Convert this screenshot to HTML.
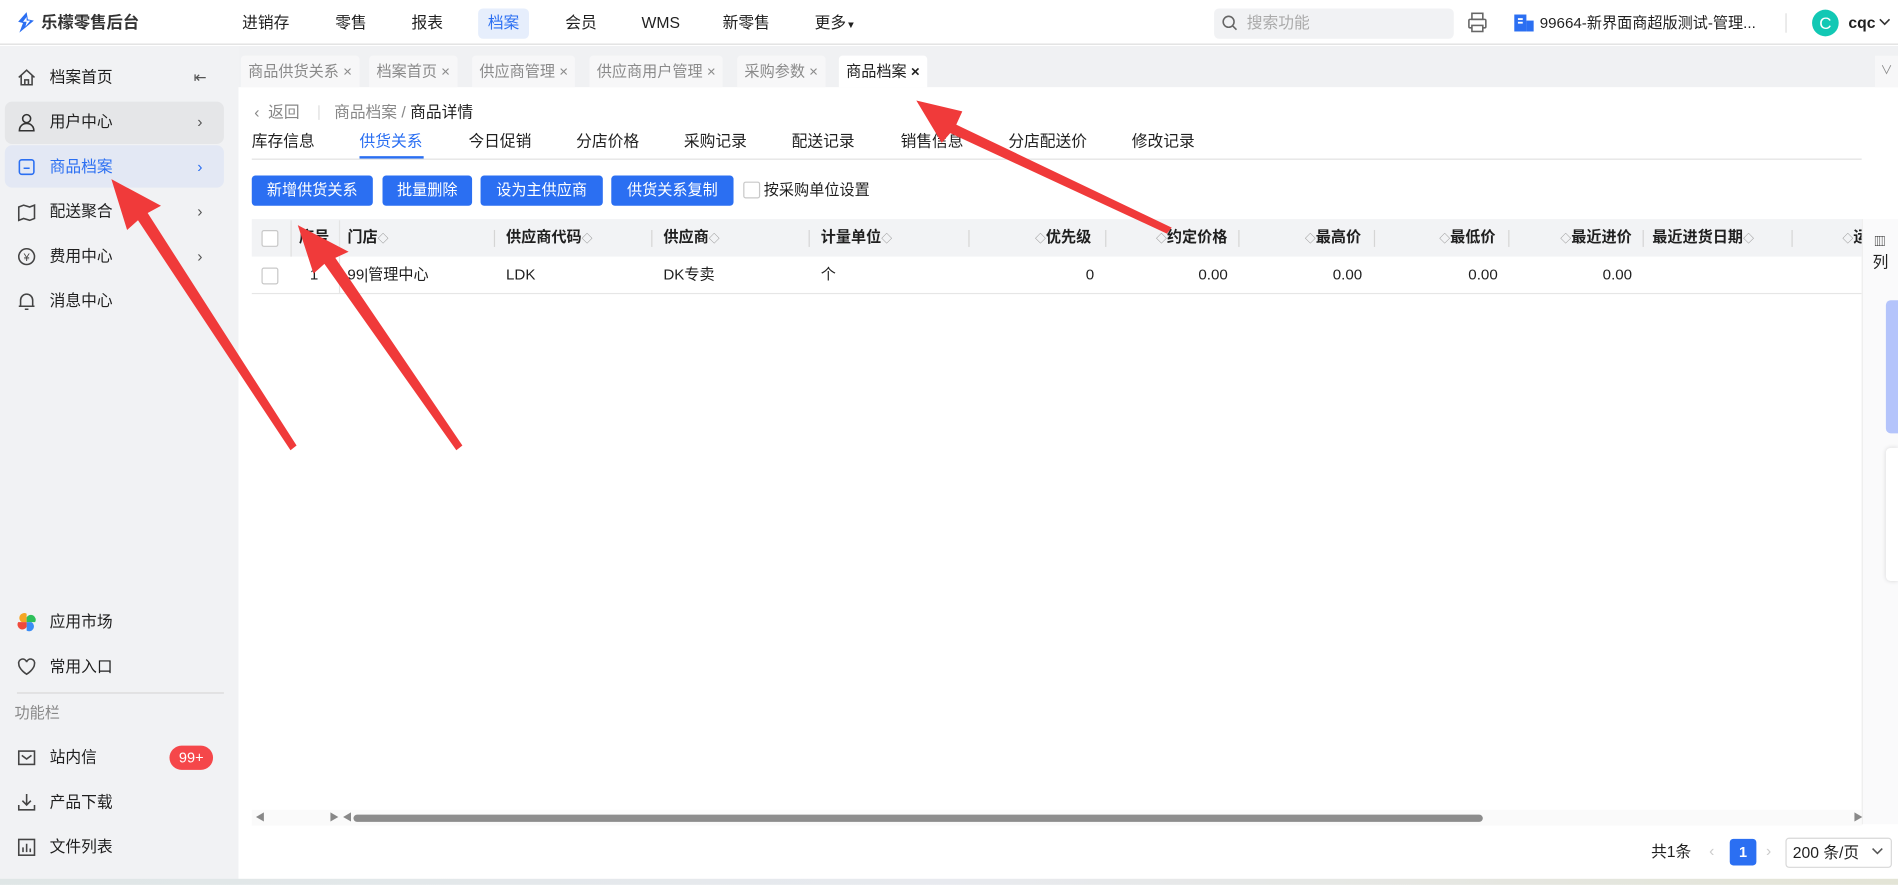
<!DOCTYPE html>
<html><head><meta charset="utf-8"><style>
*{margin:0;padding:0;box-sizing:border-box}
html,body{width:1898px;height:884px;overflow:hidden;background:#fff}
#w{position:absolute;left:0;top:0;width:1568px;height:731px;transform:scale(1.21046);transform-origin:0 0;font-family:"Liberation Sans","Noto Sans CJK SC",sans-serif;font-size:13px;color:#1f1f1f}
.a{position:absolute;white-space:nowrap;line-height:18px}
.hdr{left:0;top:0;width:1568px;height:37px;background:#fff;border-bottom:1px solid #dcdcdc}
.nav{top:10px;font-size:13px}
.side{left:0;top:38px;width:197px;height:693px;background:#f1f2f4}
.si{left:4px;width:181px;height:35px;border-radius:6px}
.st{left:41px;font-size:13px}
.ic{left:14px;width:16px;height:16px}
.chev{left:163px;color:#555;font-size:13px}
.tab{top:46px;height:26px;background:#f7f7f8;color:#8a8a8a;font-size:12.5px;padding:4px 6px;border-radius:3px 3px 0 0}
.btn{top:145px;height:25px;background:#2b6ff2;color:#fff;border-radius:3px;font-size:12.5px;text-align:center;line-height:25px}
.th{top:187px;font-weight:bold;font-size:12.5px}
.td{top:218px;font-size:12.5px}
.sep{top:190px;width:1px;height:14px;background:#d5d5d5}
.sort{color:#999;font-size:9px}
.cb{width:14px;height:14px;border:1px solid #c8c8c8;background:#fff;border-radius:2px}
</style></head><body><div id="w">
<div class="a hdr"></div>
<svg class="a" style="left:14px;top:10px" width="16" height="18" viewBox="0 0 16 18"><path d="M8 0L1 8l4 1-3 8 12-10-5-1z" fill="#2b6ff2"/><path d="M8 4l-3 4h3l-1 4 4-5H8z" fill="#fff"/></svg>
<div class="a" style="left:34px;top:10px;font-weight:bold;font-size:13.5px;color:#333">乐檬零售后台</div>
<div class="a nav" style="left:200px">进销存</div>
<div class="a nav" style="left:277px">零售</div>
<div class="a nav" style="left:340px">报表</div>
<div class="a" style="left:395px;top:7px;width:42px;height:25px;background:#e6eefc;border-radius:4px"></div>
<div class="a nav" style="left:403px;color:#2b6ff2">档案</div>
<div class="a nav" style="left:467px">会员</div>
<div class="a nav" style="left:530px">WMS</div>
<div class="a nav" style="left:597px">新零售</div>
<div class="a nav" style="left:673px">更多<span style="font-size:8px">▼</span></div>
<div class="a" style="left:1003px;top:7px;width:198px;height:25px;background:#f1f2f4;border-radius:4px"></div>
<svg class="a" style="left:1009px;top:12px" width="14" height="14"><circle cx="6" cy="6" r="4.5" fill="none" stroke="#666" stroke-width="1.3"/><path d="M9.5 9.5l3 3" stroke="#666" stroke-width="1.3"/></svg>
<div class="a" style="left:1030px;top:10px;color:#aaa">搜索功能</div>
<svg class="a" style="left:1212px;top:10px" width="17" height="18"><rect x="4" y="1" width="9" height="5" fill="none" stroke="#666" stroke-width="1.3"/><rect x="1.5" y="6" width="14" height="7" rx="1" fill="none" stroke="#666" stroke-width="1.3"/><rect x="4" y="11" width="9" height="5" fill="#fff" stroke="#666" stroke-width="1.3"/></svg>
<svg class="a" style="left:1250px;top:11px" width="18" height="16"><rect x="1" y="1" width="10" height="14" fill="#2b6ff2"/><rect x="11" y="6" width="6" height="9" fill="#2b6ff2"/><rect x="4" y="4" width="4" height="1.5" fill="#fff"/><rect x="4" y="7" width="4" height="1.5" fill="#fff"/></svg>
<div class="a" style="left:1272px;top:10px;font-size:12.5px">99664-新界面商超版测试-管理...</div>
<div class="a" style="left:1475px;top:11px;width:1px;height:16px;background:#ddd"></div>
<div class="a" style="left:1497px;top:8px;width:22px;height:22px;border-radius:50%;background:#12c8b4;color:#fff;text-align:center;line-height:22px;font-size:14px">C</div>
<div class="a" style="left:1527px;top:10px;font-weight:bold">cqc</div>
<svg class="a" style="left:1552px;top:15px" width="10" height="8"><path d="M1 1l4 4 4-4" fill="none" stroke="#333" stroke-width="1.3"/></svg>

<div class="a side"></div>
<svg class="a ic" style="top:56px" viewBox="0 0 16 16"><path d="M1.5 8L8 2l6.5 6M3.5 6.5V14h9V6.5M6.5 14v-4h3v4" fill="none" stroke="#444" stroke-width="1.3"/></svg>
<div class="a st" style="top:55px">档案首页</div>
<div class="a" style="left:160px;top:55px;color:#555">⇤</div>
<div class="a si" style="top:84px;background:#e5e6e8"></div>
<svg class="a ic" style="top:93px" viewBox="0 0 16 16"><circle cx="8" cy="5" r="3.3" fill="none" stroke="#333" stroke-width="1.3"/><path d="M2 15c0-4 3-6 6-6s6 2 6 6z" fill="none" stroke="#333" stroke-width="1.3"/></svg>
<div class="a st" style="top:92px">用户中心</div><div class="a chev" style="top:92px">›</div>
<div class="a si" style="top:120px;background:#e3e8f4"></div>
<svg class="a ic" style="top:130px" viewBox="0 0 16 16"><rect x="2" y="2" width="12" height="12" rx="2" fill="none" stroke="#2b6ff2" stroke-width="1.3"/><path d="M5.5 9h5" stroke="#2b6ff2" stroke-width="1.3"/></svg>
<div class="a st" style="top:129px;color:#2b6ff2">商品档案</div><div class="a chev" style="top:129px;color:#2b6ff2">›</div>
<svg class="a ic" style="top:167px" viewBox="0 0 16 16"><path d="M1.5 4l4-1.5 5 1.5 4-1.5v11l-4 1.5-5-1.5-4 1.5z" fill="none" stroke="#444" stroke-width="1.3"/></svg>
<div class="a st" style="top:166px">配送聚合</div><div class="a chev" style="top:166px">›</div>
<svg class="a ic" style="top:204px" viewBox="0 0 16 16"><circle cx="8" cy="8" r="6.5" fill="none" stroke="#444" stroke-width="1.3"/><text x="8" y="11.5" font-size="9" text-anchor="middle" fill="#444">¥</text></svg>
<div class="a st" style="top:203px">费用中心</div><div class="a chev" style="top:203px">›</div>
<svg class="a ic" style="top:241px" viewBox="0 0 16 16"><path d="M3 12V7a5 5 0 0110 0v5zM1.5 12h13M6.5 14.5h3" fill="none" stroke="#444" stroke-width="1.3"/></svg>
<div class="a st" style="top:240px">消息中心</div>
<svg class="a ic" style="top:506px" viewBox="0 0 16 16"><path d="M8 8V1a4 4 0 00-4 7z" fill="#f5a623"/><path d="M8 8h7a4 4 0 00-7-4z" fill="#2ec05a"/><path d="M8 8v7a4 4 0 004-7z" fill="#3a8cf5"/><path d="M8 8H1a4 4 0 007 4z" fill="#f04a3c"/></svg>
<div class="a st" style="top:505px">应用市场</div>
<svg class="a ic" style="top:543px" viewBox="0 0 16 16"><path d="M8 14S1.5 10 1.5 5.5A3.3 3.3 0 018 4a3.3 3.3 0 016.5 1.5C14.5 10 8 14 8 14z" fill="none" stroke="#444" stroke-width="1.3"/></svg>
<div class="a st" style="top:542px">常用入口</div>
<div class="a" style="left:14px;top:572px;width:171px;height:1px;background:#d8d8d8"></div>
<div class="a" style="left:12px;top:580px;color:#888;font-size:12.5px">功能栏</div>
<svg class="a ic" style="top:618px" viewBox="0 0 16 16"><rect x="1.5" y="2.5" width="13" height="11" fill="none" stroke="#444" stroke-width="1.3"/><path d="M4 6l4 3 4-3" fill="none" stroke="#444" stroke-width="1.3"/></svg>
<div class="a st" style="top:617px">站内信</div>
<div class="a" style="left:140px;top:616px;width:36px;height:20px;border-radius:10px;background:#f5474a;color:#fff;font-size:12px;text-align:center;line-height:20px">99+</div>
<svg class="a ic" style="top:655px" viewBox="0 0 16 16"><path d="M8 1v9M4.5 6.5L8 10l3.5-3.5M1.5 10v4h13v-4" fill="none" stroke="#444" stroke-width="1.3"/></svg>
<div class="a st" style="top:654px">产品下载</div>
<svg class="a ic" style="top:692px" viewBox="0 0 16 16"><rect x="1.5" y="1.5" width="13" height="13" fill="none" stroke="#444" stroke-width="1.3"/><path d="M5 12V8M8 12V5M11 12V9" stroke="#444" stroke-width="1.3"/></svg>
<div class="a st" style="top:691px">文件列表</div>

<div class="a" style="left:197px;top:38px;width:1371px;height:34px;background:#f0f1f3"></div>
<div class="a tab" style="left:199px">商品供货关系 ×</div>
<div class="a tab" style="left:305px">档案首页 ×</div>
<div class="a tab" style="left:390px">供应商管理 ×</div>
<div class="a tab" style="left:487px">供应商用户管理 ×</div>
<div class="a tab" style="left:609px">采购参数 ×</div>
<div class="a tab" style="left:693px;background:#fff;color:#1f1f1f">商品档案 <b>×</b></div>
<div class="a" style="left:1549px;top:46px;width:19px;height:26px;background:#f7f7f8;color:#888;font-size:10px;text-align:center;line-height:26px">∨</div>

<div class="a" style="left:210px;top:84px;color:#888">‹ &nbsp;返回</div>
<div class="a" style="left:263px;top:87px;width:1px;height:12px;background:#ddd"></div>
<div class="a" style="left:276px;top:84px;color:#888">商品档案 / <span style="color:#1f1f1f">商品详情</span></div>
<div class="a" style="left:208px;top:108px">库存信息</div>
<div class="a" style="left:297px;top:108px;color:#2b6ff2">供货关系</div>
<div class="a" style="left:387px;top:108px">今日促销</div>
<div class="a" style="left:476px;top:108px">分店价格</div>
<div class="a" style="left:565px;top:108px">采购记录</div>
<div class="a" style="left:654px;top:108px">配送记录</div>
<div class="a" style="left:744px;top:108px">销售信息</div>
<div class="a" style="left:833px;top:108px">分店配送价</div>
<div class="a" style="left:935px;top:108px">修改记录</div>
<div class="a" style="left:208px;top:131px;width:1330px;height:1px;background:#e2e2e2"></div>
<div class="a" style="left:297px;top:129px;width:53px;height:2px;background:#2b6ff2"></div>
<div class="a btn" style="left:208px;width:100px">新增供货关系</div>
<div class="a btn" style="left:316px;width:74px">批量删除</div>
<div class="a btn" style="left:397px;width:101px">设为主供应商</div>
<div class="a btn" style="left:505px;width:101px">供货关系复制</div>
<div class="a cb" style="left:614px;top:150px"></div>
<div class="a" style="left:631px;top:148px;font-size:12.5px">按采购单位设置</div>

<div class="a" style="left:208px;top:181px;width:1330px;height:31px;background:#f2f3f5"></div>
<div class="a" style="left:208px;top:242px;width:1330px;height:1px;background:#e6e6e6"></div>
<div class="a cb" style="left:216px;top:190px"></div>
<div class="a" style="left:240px;top:182px;width:1px;height:30px;background:#e0e0e0"></div>
<div class="a th" style="left:247px">序号</div>
<div class="a" style="left:280px;top:182px;width:1px;height:60px;background:#e4e4e4"></div>
<div class="a th" style="left:287px">门店<span class="sort">◇</span></div>
<div class="a sep" style="left:408px"></div>
<div class="a th" style="left:418px">供应商代码<span class="sort">◇</span></div>
<div class="a sep" style="left:538px"></div>
<div class="a th" style="left:548px">供应商<span class="sort">◇</span></div>
<div class="a sep" style="left:668px"></div>
<div class="a th" style="left:678px">计量单位<span class="sort">◇</span></div>
<div class="a sep" style="left:800px"></div>
<div class="a th" style="left:855px"><span class="sort">◇</span>优先级</div>
<div class="a sep" style="left:913px"></div>
<div class="a th" style="left:955px"><span class="sort">◇</span>约定价格</div>
<div class="a sep" style="left:1023px"></div>
<div class="a th" style="left:1078px"><span class="sort">◇</span>最高价</div>
<div class="a sep" style="left:1135px"></div>
<div class="a th" style="left:1189px"><span class="sort">◇</span>最低价</div>
<div class="a sep" style="left:1246px"></div>
<div class="a th" style="left:1289px"><span class="sort">◇</span>最近进价</div>
<div class="a sep" style="left:1357px"></div>
<div class="a th" style="left:1365px">最近进货日期<span class="sort">◇</span></div>
<div class="a sep" style="left:1480px"></div>
<div class="a th" style="left:1522px"><span class="sort">◇</span>运</div>
<div class="a cb" style="left:216px;top:221px"></div>
<div class="a td" style="left:256px">1</div>
<div class="a td" style="left:287px">99|管理中心</div>
<div class="a td" style="left:418px">LDK</div>
<div class="a td" style="left:548px">DK专卖</div>
<div class="a td" style="left:678px">个</div>
<div class="a td" style="left:897px">0</div>
<div class="a td" style="left:990px">0.00</div>
<div class="a td" style="left:1101px">0.00</div>
<div class="a td" style="left:1213px">0.00</div>
<div class="a td" style="left:1324px">0.00</div>

<div class="a" style="left:1538px;top:181px;width:30px;height:500px;background:#fafafb;border-left:1px solid #eee"></div>
<div class="a" style="left:1548px;top:192px;font-size:10px">▥</div>
<div class="a" style="left:1547px;top:208px;font-size:13px">列</div>
<div class="a" style="left:1558px;top:248px;width:10px;height:110px;background:#b4c4fb;border-radius:4px 0 0 4px"></div>
<div class="a" style="left:1558px;top:370px;width:10px;height:110px;background:#fff;border-radius:4px 0 0 4px;box-shadow:0 0 4px rgba(0,0,0,.15)"></div>

<div class="a" style="left:208px;top:669px;width:1330px;height:13px;background:#fafafa"></div>
<div class="a" style="left:211px;top:667px;font-size:8px;color:#888">◀</div>
<div class="a" style="left:272px;top:667px;font-size:8px;color:#888">▶</div>
<div class="a" style="left:283px;top:667px;font-size:8px;color:#888">◀</div>
<div class="a" style="left:292px;top:673px;width:933px;height:6px;border-radius:3px;background:#8c8c8c"></div>
<div class="a" style="left:1531px;top:667px;font-size:8px;color:#888">▶</div>

<div class="a" style="left:1364px;top:695px">共1条</div>
<div class="a" style="left:1412px;top:694px;color:#ccc">‹</div>
<div class="a" style="left:1429px;top:693px;width:22px;height:22px;background:#2b6ff2;border-radius:3px;color:#fff;text-align:center;line-height:22px;font-size:12px;font-weight:bold">1</div>
<div class="a" style="left:1459px;top:694px;color:#ccc">›</div>
<div class="a" style="left:1475px;top:692px;width:88px;height:25px;border:1px solid #d8d8d8;border-radius:3px;padding:3px 5px">200 条/页</div>
<svg class="a" style="left:1546px;top:700px" width="10" height="8"><path d="M1 1l4 4 4-4" fill="none" stroke="#555" stroke-width="1.3"/></svg>
<div class="a" style="left:0;top:726px;width:1568px;height:5px;background:linear-gradient(90deg,#dfe6e6,#e8eaef,#e3e4d6)"></div>

<svg class="a" style="left:0;top:0" width="1568" height="731">
<g fill="#f03a3a">
<polygon points="92,148 133,170 122,176 245,368 240,372 114,182 105,190"/>
<polygon points="246,186 288,208 277,213 382,368 377,372 268,218 259,226"/>
<polygon points="757,83 795,92 790,103 968,188 964,193 785,110 778,118"/>
</g></svg>
</div></body></html>
